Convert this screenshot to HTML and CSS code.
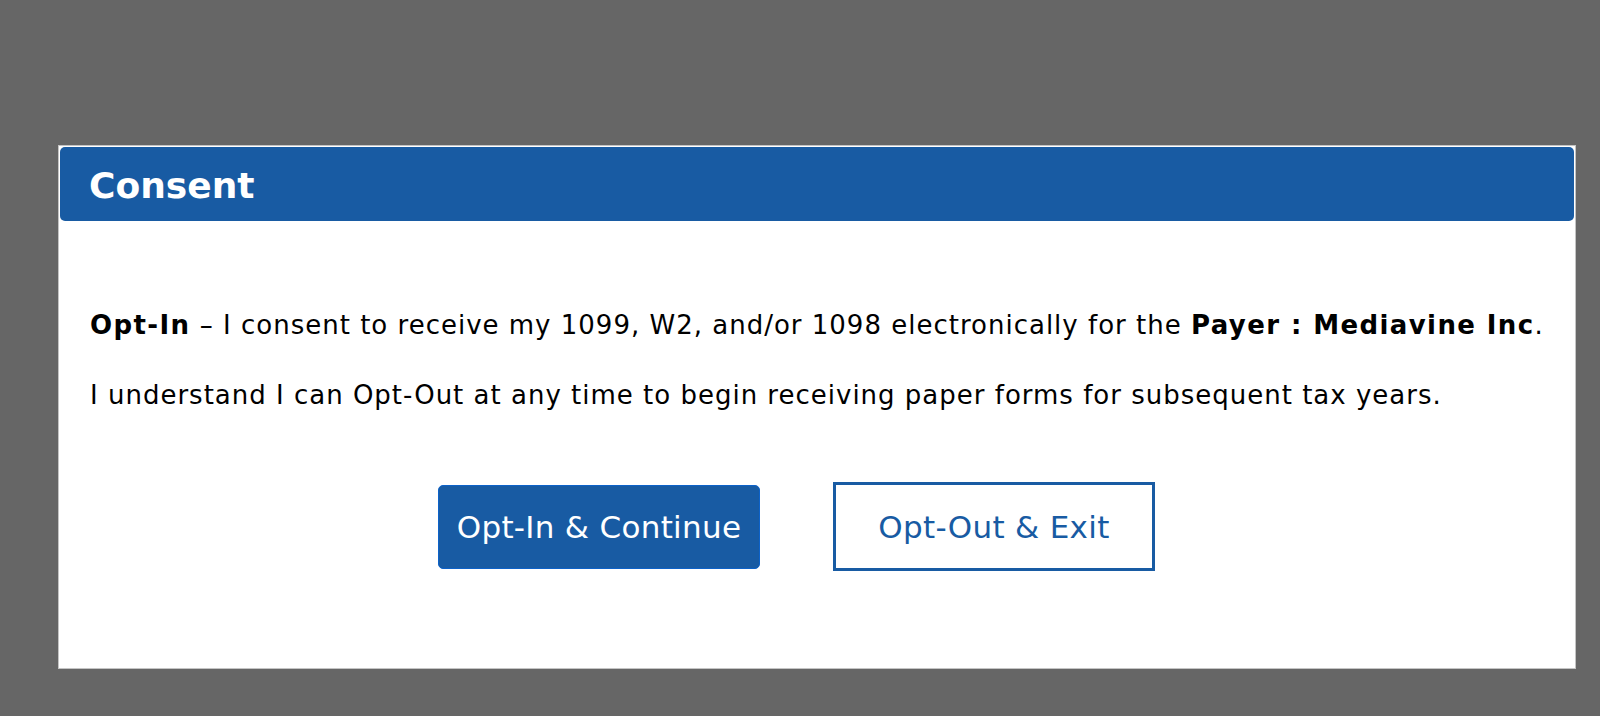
FILE: index.html
```html
<!DOCTYPE html>
<html lang="en">
<head>
    <meta charset="UTF-8">
    <meta name="viewport" content="width=device-width, initial-scale=1.0">
    <title>Consent</title>
    <link rel="stylesheet" href="styles.css">
</head>
<body>
    <div class="dialog">
        <header class="dialog-head">
            <h1>Consent</h1>
        </header>
        <div class="dialog-body">
            <p><b>Opt-In</b> &ndash; I consent to receive my 1099, W2, and/or 1098 electronically for the <b>Payer : Mediavine Inc</b>.</p>
            <p>I understand I can Opt-Out at any time to begin receiving paper forms for subsequent tax years.</p>
            <div class="actions">
                <button class="btn btn-primary">Opt-In &amp; Continue</button>
                <button class="btn btn-outline">Opt-Out &amp; Exit</button>
            </div>
        </div>
    </div>
</body>
</html>
```

FILE: styles.css
```css
body {
    font-family: "DejaVu Sans", Verdana, sans-serif;
    margin: 0;
    padding: 0;
    background-color: #666;
    min-height: 716px;
}
.dialog {
    margin: 145px 24px 0 58px;
    background-color: #fff;
    border: 1px solid #c4c4c4;
    padding: 1px;
}
.dialog-head {
    background-color: #185ba3;
    color: #fff;
    height: 74px;
    border-radius: 5px;
    display: flex;
    align-items: center;
    padding-left: 29px;
}
.dialog-head h1 {
    margin: 2px 0 0 0;
    font-size: 36px;
    font-weight: bold;
}
.dialog-body {
    padding: 89px 10px 96px 30px;
    color: #000;
}
.dialog-body p {
    margin: 0 0 40px 0;
    font-size: 26px;
    line-height: 30px;
    letter-spacing: 1px;
    white-space: nowrap;
}
.dialog-body p b {
    letter-spacing: 1.4px;
}
.dialog-body p:last-of-type {
    margin-bottom: 0;
}
.actions {
    display: flex;
    justify-content: center;
    align-items: center;
    gap: 73px;
    padding-right: 61px;
    margin-top: 72px;
}
.btn {
    font-family: "DejaVu Sans", Verdana, sans-serif;
    font-size: 31px;
    letter-spacing: 0.3px;
    width: 322px;
    cursor: pointer;
}
.btn-primary {
    height: 84px;
    background-color: #185ba3;
    color: #fff;
    border: 1px solid #0d62c9;
    border-radius: 5px;
}
.btn-outline {
    height: 89px;
    background-color: #fff;
    color: #185ba3;
    border: 3px solid #185ba3;
    border-radius: 0;
}
```
